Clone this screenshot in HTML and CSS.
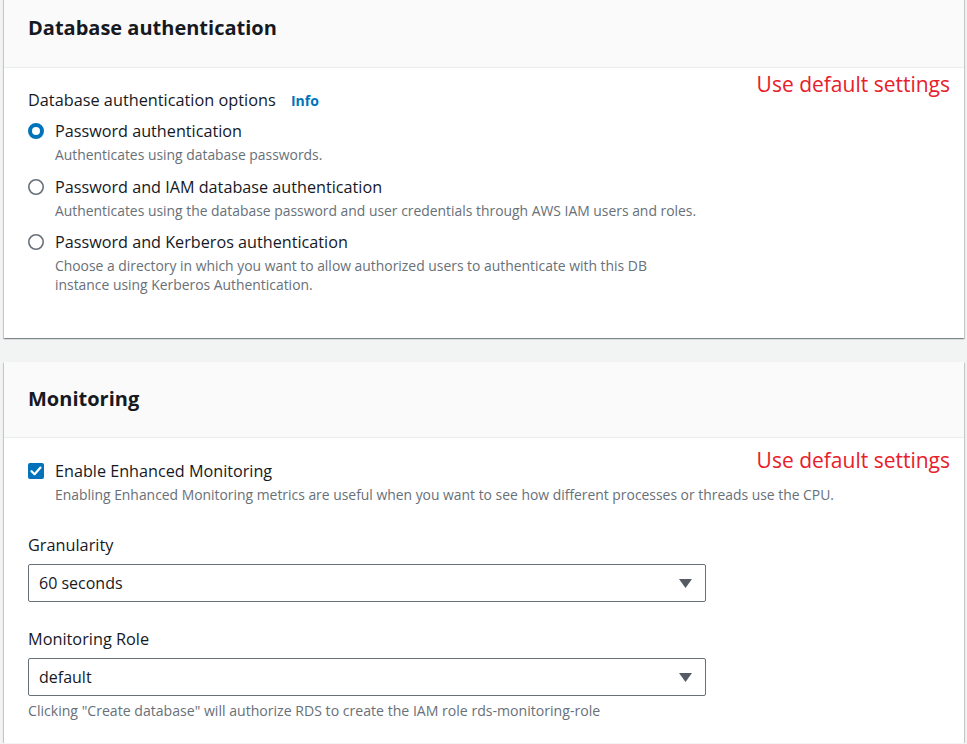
FILE: index.html
```html
<!DOCTYPE html>
<html lang="en">
<head>
<meta charset="utf-8">
<title>Database authentication and Monitoring</title>
<link rel="stylesheet" href="styles.css">
</head>
<body>
<div class="page">
  <section class="card card-first">
    <header class="card-header"><h2>Database authentication</h2></header>
    <div class="card-body body-auth">
      <div class="field-label">Database authentication options <a class="info" href="#">Info</a></div>
      <div class="options">
        <div class="option">
          <span class="radio radio-on"><svg width="16" height="16" viewBox="0 0 16 16"><circle cx="8" cy="8" r="6" fill="#fff" stroke="#0073bb" stroke-width="4"/></svg></span>
          <div class="option-text">
            <div class="option-label">Password authentication</div>
            <div class="option-desc">Authenticates using database passwords.</div>
          </div>
        </div>
        <div class="option">
          <span class="radio"><svg width="16" height="16" viewBox="0 0 16 16"><circle cx="8" cy="8" r="7.2" fill="#fff" stroke="#687078" stroke-width="1.6"/></svg></span>
          <div class="option-text">
            <div class="option-label">Password and IAM database authentication</div>
            <div class="option-desc">Authenticates using the database password and user credentials through AWS IAM users and roles.</div>
          </div>
        </div>
        <div class="option">
          <span class="radio"><svg width="16" height="16" viewBox="0 0 16 16"><circle cx="8" cy="8" r="7.2" fill="#fff" stroke="#687078" stroke-width="1.6"/></svg></span>
          <div class="option-text">
            <div class="option-label">Password and Kerberos authentication</div>
            <div class="option-desc desc-narrow">Choose a directory in which you want to allow authorized users to authenticate with this DB instance using Kerberos Authentication.</div>
          </div>
        </div>
      </div>
    </div>
    <div class="note note-first">Use default settings</div>
  </section>

  <section class="card card-second">
    <header class="card-header"><h2>Monitoring</h2></header>
    <div class="card-body body-monitor">
      <div class="option">
        <span class="checkbox"><svg width="16" height="16" viewBox="0 0 16 16"><rect x="0" y="0" width="16" height="16" rx="2" fill="#0073bb"/><path d="M3.5 8.2 L6.6 11.2 L12.5 4.6" fill="none" stroke="#fff" stroke-width="2.2" stroke-linecap="round" stroke-linejoin="round"/></svg></span>
        <div class="option-text">
          <div class="option-label">Enable Enhanced Monitoring</div>
          <div class="option-desc">Enabling Enhanced Monitoring metrics are useful when you want to see how different processes or threads use the CPU.</div>
        </div>
      </div>

      <div class="form-field field-granularity">
        <div class="field-label">Granularity</div>
        <div class="select"><span>60 seconds</span><svg class="caret" width="13" height="9" viewBox="0 0 13 9"><path d="M0 0 H13 L6.5 9 Z" fill="#545b64"/></svg></div>
      </div>

      <div class="form-field field-role">
        <div class="field-label">Monitoring Role</div>
        <div class="select"><span>default</span><svg class="caret" width="13" height="9" viewBox="0 0 13 9"><path d="M0 0 H13 L6.5 9 Z" fill="#545b64"/></svg></div>
        <div class="helper">Clicking "Create database" will authorize RDS to create the IAM role rds-monitoring-role</div>
      </div>
    </div>
    <div class="note note-second">Use default settings</div>
  </section>
</div>
</body>
</html>
```

FILE: styles.css
```css
html, body {
  margin: 0;
  padding: 0;
  background: #f2f3f3;
}

body {
  font-family: "Open Sans", "Noto Sans", Arial, sans-serif;
  color: #16191f;
  overflow: hidden;
}

.page {
  padding: 0 3px 0 4px;
  display: flex;
  flex-direction: column;
  gap: 24px;
}

.card {
  position: relative;
  background: #fff;
  box-shadow: 0 1px 1px 0 rgba(0, 28, 36, 0.3), 1px 1px 1px 0 rgba(0, 28, 36, 0.15), -1px 1px 1px 0 rgba(0, 28, 36, 0.15);
}

.card-first {
  margin-top: -9px;
}

.card-header {
  background: #fafafa;
  border-bottom: 1px solid #eaeded;
  padding: 22px 24px 23px;
}

.card-first .card-header {
  padding-bottom: 24px;
}

.card-header h2 {
  margin: 0;
  font-size: 20px;
  line-height: 30px;
  font-weight: 700;
  color: #16191f;
}

.card-body {
  padding: 0 24px;
}

.body-auth {
  padding-top: 21px;
  padding-bottom: 44px;
}

.body-monitor {
  padding-top: 21px;
  padding-bottom: 24px;
}

.field-label {
  font-size: 16.3px;
  line-height: 22px;
  color: #16191f;
}

.info {
  margin-left: 11px;
  font-size: 14px;
  font-weight: 700;
  color: #0073bb;
  text-decoration: none;
}

.options {
  margin-top: 7px;
  display: flex;
  flex-direction: column;
  gap: 10.5px;
}

.option {
  display: flex;
  align-items: flex-start;
  gap: 11px;
}

.radio, .checkbox {
  flex: none;
  width: 16px;
  height: 16px;
  margin-top: 4px;
  display: block;
}

.radio svg, .checkbox svg {
  display: block;
}

.option-label {
  font-size: 16.2px;
  line-height: 24px;
}

.option-desc {
  margin-top: 2px;
  font-size: 13.9px;
  line-height: 19px;
  color: #687078;
}

.desc-narrow {
  max-width: 640px;
}

.form-field {
  display: flex;
  flex-direction: column;
}

.field-granularity {
  margin-top: 30px;
}

.field-role {
  margin-top: 26px;
}

.select {
  margin-top: 8px;
  box-sizing: border-box;
  width: 678px;
  height: 38px;
  border: 1px solid #687078;
  border-radius: 2px;
  display: flex;
  align-items: center;
  justify-content: space-between;
  padding: 0 13px 0 10px;
  font-size: 16px;
  color: #16191f;
}

.caret {
  display: block;
}

.helper {
  margin-top: 7px;
  font-size: 14.1px;
  line-height: 16px;
  color: #687078;
}

.note {
  position: absolute;
  right: 14px;
  font-family: "Open Sans", "Noto Sans", sans-serif;
  font-size: 21px;
  line-height: 28px;
  color: #e8202a;
}

.note-first {
  top: 79px;
}

.note-second {
  top: 84px;
}
```
